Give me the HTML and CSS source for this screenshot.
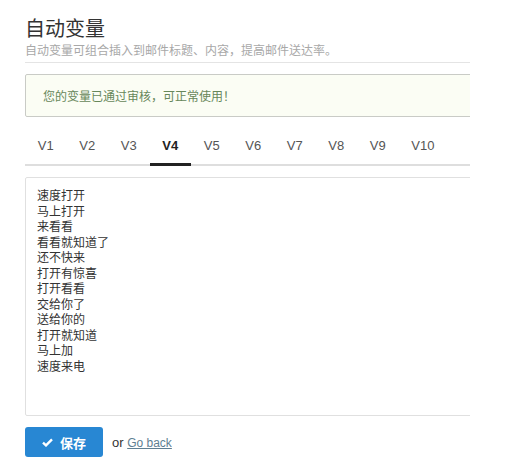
FILE: index.html
```html
<!DOCTYPE html>
<html lang="zh-CN">
<head>
    <meta charset="UTF-8">
    <meta name="viewport" content="width=device-width, initial-scale=1.0">
    <title>自动变量</title>
    <link rel="stylesheet" href="styles.css">
</head>
<body>
    <div class="page">
        <div class="content">
            <div class="page-header">
                <h1>自动变量</h1>
                <p class="subtitle">自动变量可组合插入到邮件标题、内容，提高邮件送达率。</p>
            </div>

            <div class="alert">您的变量已通过审核，可正常使用！</div>

            <ul class="tabs">
                <li><a href="#">V1</a></li>
                <li><a href="#">V2</a></li>
                <li><a href="#">V3</a></li>
                <li class="active"><a href="#">V4</a></li>
                <li><a href="#">V5</a></li>
                <li><a href="#">V6</a></li>
                <li><a href="#">V7</a></li>
                <li><a href="#">V8</a></li>
                <li><a href="#">V9</a></li>
                <li><a href="#">V10</a></li>
            </ul>

            <textarea class="vars">速度打开
马上打开
来看看
看看就知道了
还不快来
打开有惊喜
打开看看
交给你了
送给你的
打开就知道
马上加
速度来电</textarea>

            <div class="actions">
                <button class="btn-save">
                    <svg width="11" height="9" viewBox="0 0 11 9"><path d="M1 4.6 L4 7.4 L10 1.4" fill="none" stroke="#fff" stroke-width="2.4"/></svg>
                    保存
                </button>
                <span class="or">or <a href="#">Go back</a></span>
            </div>
        </div>
    </div>
</body>
</html>
```

FILE: styles.css
```css
body {
    margin: 0;
    background-color: #fff;
    font-family: "Liberation Sans", "Noto Sans CJK SC", sans-serif;
    color: #333;
}
.page {
    margin-left: 25px;
    width: 445px;
    overflow: hidden;
    padding-top: 16px;
}
.content {
    width: 480px;
}
.page-header {
    border-bottom: 1px solid #e4e4e4;
    padding-bottom: 5px;
}
h1 {
    margin: 0;
    font-family: "Noto Sans CJK SC", sans-serif;
    font-size: 20px;
    font-weight: 400;
    line-height: 24px;
    color: #333;
}
.subtitle {
    margin: 3px 0 0;
    font-family: "Noto Sans CJK SC", sans-serif;
    font-size: 12px;
    line-height: 14px;
    color: #a8a8a8;
}
.alert {
    margin-top: 11px;
    height: 41px;
    line-height: 41px;
    padding-left: 17px;
    border: 1px solid #c9cbc6;
    border-radius: 2px;
    background-color: #fbfdf4;
    font-family: "Noto Sans CJK SC", sans-serif;
    font-size: 12px;
    color: #67875a;
}
.tabs {
    display: flex;
    list-style: none;
    margin: 10px 0 0;
    padding: 0;
    border-bottom: 2px solid #dedede;
}
.tabs a {
    display: block;
    padding: 11px 12.8px 9px;
    margin-bottom: -2px;
    line-height: 16px;
    font-size: 13px;
    color: #555;
    text-decoration: none;
    border-bottom: 3px solid transparent;
}
.tabs .active a {
    color: #222;
    font-weight: bold;
    border-bottom-color: #222;
}
.vars {
    display: block;
    box-sizing: border-box;
    width: 100%;
    height: 239px;
    margin-top: 11px;
    padding: 9px 11px;
    border: 1px solid #e0e0e0;
    border-radius: 2px;
    resize: none;
    font-family: "Noto Sans CJK SC", sans-serif;
    font-size: 12px;
    line-height: 15.5px;
    color: #333;
    background-color: #fff;
}
.actions {
    display: flex;
    align-items: center;
    margin-top: 11px;
}
.btn-save {
    display: flex;
    align-items: center;
    gap: 7px;
    width: 78px;
    height: 30px;
    padding: 0 0 0 17px;
    border: none;
    border-radius: 3px;
    background-color: #2887d3;
    color: #fff;
    font-family: "Noto Sans CJK SC", sans-serif;
    font-size: 13px;
    font-weight: bold;
    cursor: pointer;
}
.or {
    margin-left: 9px;
    font-size: 13px;
    color: #333;
}
.or a {
    font-size: 12px;
    color: #5f7f93;
}
```
